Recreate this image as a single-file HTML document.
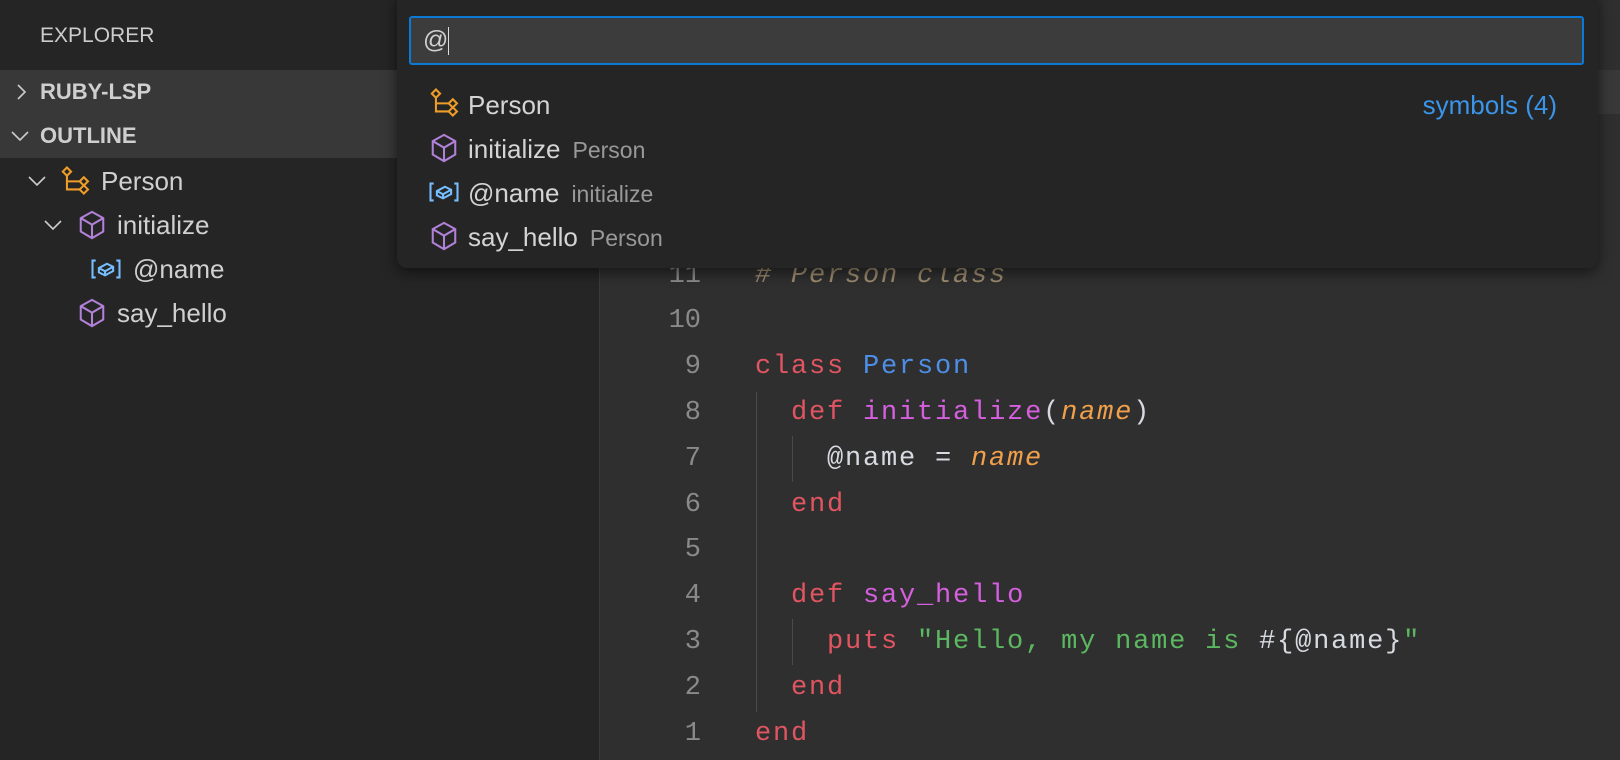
<!DOCTYPE html>
<html><head><meta charset="utf-8"><style>
*{margin:0;padding:0;box-sizing:border-box}
body{width:1620px;height:760px;overflow:hidden;background:#2f2f2f;font-family:"Liberation Sans",sans-serif;position:relative}
.side{position:absolute;left:0;top:0;width:600px;height:760px;background:#252525;border-right:1px solid #3a3a3a}
.abs{position:absolute;white-space:nowrap}
.hdr{position:absolute;left:0;width:600px;height:44px;background:#383838;color:#cfcfcf;font-weight:bold;font-size:22px;line-height:44px;padding-left:40px}
.tree{position:absolute;color:#d0d0d0;font-size:26px;line-height:44px;height:44px}
.ico{position:absolute;width:30px;height:30px}
.code{position:absolute;left:755px;font-family:"Liberation Mono",monospace;font-size:27px;letter-spacing:1.8px;color:#d7dae0;white-space:pre;line-height:46px;height:46px}
.ln{position:absolute;right:919px;width:80px;text-align:right;font-family:"Liberation Mono",monospace;font-size:27px;color:#8a8a8a;line-height:46px}
.k{color:#e05561}.c{color:#4d8fe6}.m{color:#d55fde}.p{color:#f0a04b;font-style:italic}.s{color:#5cb860}.cm{color:#9c8a6e;font-style:italic}
.pal{position:absolute;left:397px;top:-8px;width:1201px;height:276px;background:#252525;border-radius:10px;box-shadow:0 4px 14px rgba(0,0,0,.55)}
.inp{position:absolute;left:409px;top:16px;width:1175px;height:49px;background:#3c3c3c;border:2px solid #0a7ad6;border-radius:3px;color:#d0d0d0;font-size:25px;line-height:45px;padding-left:12px}
.it{position:absolute;left:468px;font-size:26px;color:#d4d4d4;line-height:44px;height:44px}
.it span{color:#999;font-size:23px;margin-left:12px}
</style></head><body>
<div class="abs" style="left:1598px;top:70px;width:22px;height:44px;background:#383838"></div>
<div class="abs" style="left:600px;top:70px;width:1000px;height:44px;background:#383838"></div>

<div class="side">
  <div class="abs" style="left:40px;top:24px;color:#cccccc;font-size:21px">EXPLORER</div>
  <div class="hdr" style="top:70px">RUBY-LSP</div>
  <div class="hdr" style="top:114px">OUTLINE</div>
  <svg class="abs" style="left:13px;top:82px" width="16" height="20" viewBox="0 0 16 20"><path d="M5 3l7 7-7 7" fill="none" stroke="#ccc" stroke-width="1.6"/></svg>
  <svg class="abs" style="left:10px;top:128px" width="20" height="16" viewBox="0 0 20 16"><path d="M2 4l8 8 8-8" fill="none" stroke="#ccc" stroke-width="1.6"/></svg>
  <svg class="abs" style="left:27px;top:173px" width="20" height="16" viewBox="0 0 20 16"><path d="M2 4l8 8 8-8" fill="none" stroke="#ccc" stroke-width="1.6"/></svg>
  <svg class="abs" style="left:43px;top:217px" width="20" height="16" viewBox="0 0 20 16"><path d="M2 4l8 8 8-8" fill="none" stroke="#ccc" stroke-width="1.6"/></svg>
</div>

<svg width="0" height="0" style="position:absolute"><defs>
<g id="cls"><path d="M1.5 3l2.2-2.2 2.2 2.2-2.2 2.2z M10.5 8.2l2.2-2.2 2.2 2.2-2.2 2.2z M10.5 12.5l2.2-2.2 2.2 2.2-2.2 2.2z M3.7 5.2v7.3h6.8 M3.7 8.2h6.8" fill="none" stroke="#ee9d28" stroke-width="1.1"/></g>
<g id="mth"><path d="M8 1l6 3.3v7.2L8 15 2 11.5V4.3z M2 4.3L8 7.8l6-3.5 M8 7.8V15" fill="none" stroke="#b180d7" stroke-width="1.1"/></g>
<g id="fld"><path d="M2.5 3.5H.8v9h1.7 M13.5 3.5h1.7v9h-1.7" fill="none" stroke="#75beff" stroke-width="1.1"/><path d="M4.2 7.5l4.3-2.3 3.3 1.6v2.3l-4.3 2.3-3.3-1.6z M4.2 7.5l3.3 1.7 4.3-2.4 M7.5 9.2v2.2" fill="none" stroke="#75beff" stroke-width="1.1"/></g>
</defs></svg>

<svg class="ico" style="left:60px;top:166px" viewBox="0 0 16 16"><use href="#cls"/></svg>
<div class="tree" style="left:101px;top:159px">Person</div>
<svg class="ico" style="left:77px;top:210px" viewBox="0 0 16 16"><use href="#mth"/></svg>
<div class="tree" style="left:117px;top:203px">initialize</div>
<svg class="ico" style="left:91px;top:254px" viewBox="0 0 16 16"><use href="#fld"/></svg>
<div class="tree" style="left:133px;top:247px">@name</div>
<svg class="ico" style="left:77px;top:298px" viewBox="0 0 16 16"><use href="#mth"/></svg>
<div class="tree" style="left:117px;top:291px">say_hello</div>

<!-- editor -->
<div class="abs" style="left:756px;top:392px;width:1px;height:320px;background:#4a4a4a"></div>
<div class="abs" style="left:792px;top:436px;width:1px;height:46px;background:#4a4a4a"></div>
<div class="abs" style="left:792px;top:619px;width:1px;height:46px;background:#4a4a4a"></div>
<div class="ln" style="top:253px">11</div><div class="code cm" style="top:253px"># Person class</div>
<div class="ln" style="top:298px">10</div>
<div class="ln" style="top:344px">9</div><div class="code" style="top:344px"><span class="k">class</span> <span class="c">Person</span></div>
<div class="ln" style="top:390px">8</div><div class="code" style="top:390px">  <span class="k">def</span> <span class="m">initialize</span>(<span class="p">name</span>)</div>
<div class="ln" style="top:436px">7</div><div class="code" style="top:436px">    @name = <span class="p">name</span></div>
<div class="ln" style="top:482px">6</div><div class="code k" style="top:482px">  end</div>
<div class="ln" style="top:527px">5</div>
<div class="ln" style="top:573px">4</div><div class="code" style="top:573px">  <span class="k">def</span> <span class="m">say_hello</span></div>
<div class="ln" style="top:619px">3</div><div class="code" style="top:619px">    <span class="k">puts</span> <span class="s">"Hello, my name is </span>#{@name}<span class="s">"</span></div>
<div class="ln" style="top:665px">2</div><div class="code k" style="top:665px">  end</div>
<div class="ln" style="top:711px">1</div><div class="code k" style="top:711px">end</div>

<!-- palette -->
<div class="pal"></div>
<div class="inp">@<span style="display:inline-block;width:1px;height:28px;background:#ddd;vertical-align:middle"></span></div>
<svg class="ico" style="left:429px;top:88px" viewBox="0 0 16 16"><use href="#cls"/></svg>
<div class="it" style="top:83px">Person</div>
<div class="abs" style="right:63px;top:83px;line-height:44px;font-size:26px;color:#3a95e8">symbols (4)</div>
<svg class="ico" style="left:429px;top:133px" viewBox="0 0 16 16"><use href="#mth"/></svg>
<div class="it" style="top:127px">initialize<span>Person</span></div>
<svg class="ico" style="left:429px;top:177px" viewBox="0 0 16 16"><use href="#fld"/></svg>
<div class="it" style="top:171px">@name<span>initialize</span></div>
<svg class="ico" style="left:429px;top:221px" viewBox="0 0 16 16"><use href="#mth"/></svg>
<div class="it" style="top:215px">say_hello<span>Person</span></div>
</body></html>
